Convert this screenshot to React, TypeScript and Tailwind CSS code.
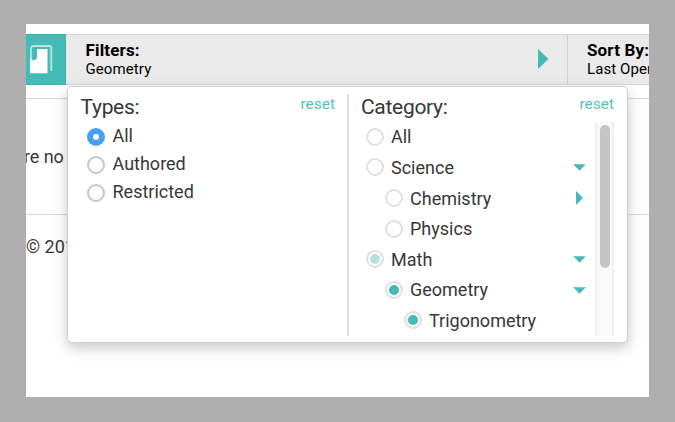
import React from "react";

type Mark = "none" | "partial" | "full";

function CategoryRadio({ mark }: { mark: Mark }) {
  return (
    <span className="flex h-[18px] w-[18px] shrink-0 items-center justify-center rounded-full border-2 border-[#dde1e0] bg-white">
      {mark === "full" && <span className="h-[10px] w-[10px] rounded-full bg-[#43bab5]" />}
      {mark === "partial" && <span className="h-[10px] w-[10px] rounded-full bg-[#b5e2e0]" />}
    </span>
  );
}

const indents = ["pl-0", "pl-[19px]", "pl-[38px]"];

const categories: { label: string; level: number; mark: Mark; arrow?: "down" | "right" }[] = [
  { label: "All", level: 0, mark: "none" },
  { label: "Science", level: 0, mark: "none", arrow: "down" },
  { label: "Chemistry", level: 1, mark: "none", arrow: "right" },
  { label: "Physics", level: 1, mark: "none" },
  { label: "Math", level: 0, mark: "partial", arrow: "down" },
  { label: "Geometry", level: 1, mark: "full", arrow: "down" },
  { label: "Trigonometry", level: 2, mark: "full" },
];

function Arrow({ dir }: { dir: "down" | "right" }) {
  return (
    <svg width="13" height="14" viewBox="0 0 13 14" className="shrink-0" fill="#43bab5">
      {dir === "down" ? <path d="M.2 4.2h12.6L6.5 10.8z" /> : <path d="M3 0v14l7-7z" />}
    </svg>
  );
}

function BookIcon() {
  return (
    <svg width="24" height="30" viewBox="0 0 24 30" fill="none">
      <path d="M2 16V4.4Q2 2 4.3 2H20.5Q22.3 2 22.3 3.8V27" stroke="#b4e3e1" strokeWidth="1.8" />
      <path d="M8 5H18.5V29.2H1V14.6L4.5 16.6L8 14.6Z" fill="#fff" />
    </svg>
  );
}

export default function App() {
  return (
    <div className="h-[422px] w-[675px] overflow-hidden bg-[#afafaf] px-[26px] pt-6 font-['Roboto',sans-serif] text-[#373737]">
      <div className="relative h-[373px] overflow-hidden bg-white pt-[9.5px]">
        <div className="flex h-[52px] items-start">
          <div className="flex h-[51px] w-[40px] items-center border border-l-0 border-[#3db0ac] bg-[#45bbb7] pl-[3px]">
            <BookIcon />
          </div>
          <div className="flex h-[51px] min-w-0 flex-1 border-y border-[#d5d5d5] bg-[#eaeaea] text-black">
            <div className="flex w-[502px] shrink-0 items-center justify-between border-r border-[#d0d0d0] pr-[18px] pl-[19.5px]">
              <div className="-mt-px">
                <div className="text-[17px] leading-[20px] font-bold tracking-[0.15px]">Filters:</div>
                <div className="text-[15px] leading-[18px] tracking-[0.1px]">Geometry</div>
              </div>
              <svg width="11" height="20" viewBox="0 0 11 20" fill="#43bab5">
                <path d="M0 0v20l10.5-10z" />
              </svg>
            </div>
            <div className="mt-[5px] shrink-0 pl-[19px] whitespace-nowrap">
              <div className="text-[17px] leading-[20px] font-bold tracking-[0.15px]">Sort By:</div>
              <div className="text-[15px] leading-[18px] tracking-[0.1px]">Last Opened</div>
            </div>
          </div>
        </div>

        <div className="mt-3 h-[117px] border-y border-[#d6d6d6] pt-[48px]">
          <div className="-ml-[32.5px] text-[18px] leading-[20px] whitespace-nowrap">There no</div>
        </div>
        <div className="mt-[22px] text-[18px] leading-[20px] whitespace-nowrap">© 2017</div>

        <div className="absolute top-[62px] left-[41px] flex h-[257px] w-[561px] rounded-[5px] border border-[#cfcfcf] bg-white pt-[7px] pb-1.5 shadow-[0_5px_14px_rgba(0,0,0,0.22)]">
          <section className="w-[281px] border-r-2 border-[#dfdfdf] pr-[12px] pl-[12.5px]">
            <div className="flex items-start justify-between">
              <h2 className="text-[21px] leading-[26px] tracking-[-0.3px]">Types:</h2>
              <button className="mt-px text-[15.5px] leading-[18px] text-[#5cc0bb]">reset</button>
            </div>
            <div className="mt-[2px] pl-[6px]">
              {["All", "Authored", "Restricted"].map((t, i) => (
                <label key={t} className="flex h-7 items-center gap-[8px] text-[18px] leading-[28px]">
                  {i === 0 ? (
                    <span className="mt-px flex h-[18px] w-[18px] items-center justify-center rounded-full bg-[#459ffa]">
                      <span className="h-[6px] w-[6px] rounded-full bg-white" />
                    </span>
                  ) : (
                    <span className="mt-px h-[18px] w-[18px] rounded-full border-2 border-[#c6c6c6] bg-white" />
                  )}
                  {t}
                </label>
              ))}
            </div>
          </section>

          <section className="flex-1 pr-[13px] pl-[12px]">
            <div className="flex items-start justify-between">
              <h2 className="text-[21px] leading-[26px] tracking-[-0.3px]">Category:</h2>
              <button className="mt-px text-[15.5px] leading-[18px] text-[#5cc0bb]">reset</button>
            </div>
            <div className="mt-px flex h-[215px] overflow-hidden">
              <div className="flex-1 pt-[0.6px] pl-[5px]">
                {categories.map((c) => (
                  <div
                    key={c.label}
                    className={`flex h-[30.6px] items-center gap-[7px] pr-[9px] text-[18px] ${indents[c.level]}`}
                  >
                    <CategoryRadio mark={c.mark} />
                    <span className="flex-1">{c.label}</span>
                    {c.arrow && <Arrow dir={c.arrow} />}
                  </div>
                ))}
              </div>
              <div className="mt-px w-[19px] border-x-2 border-[#f0f0f0] bg-[#fafafa] pt-[3px] pl-[3px]">
                <div className="h-[143px] w-[10px] rounded-full bg-[#c5c5c5]" />
              </div>
            </div>
          </section>
        </div>
      </div>
    </div>
  );
}
